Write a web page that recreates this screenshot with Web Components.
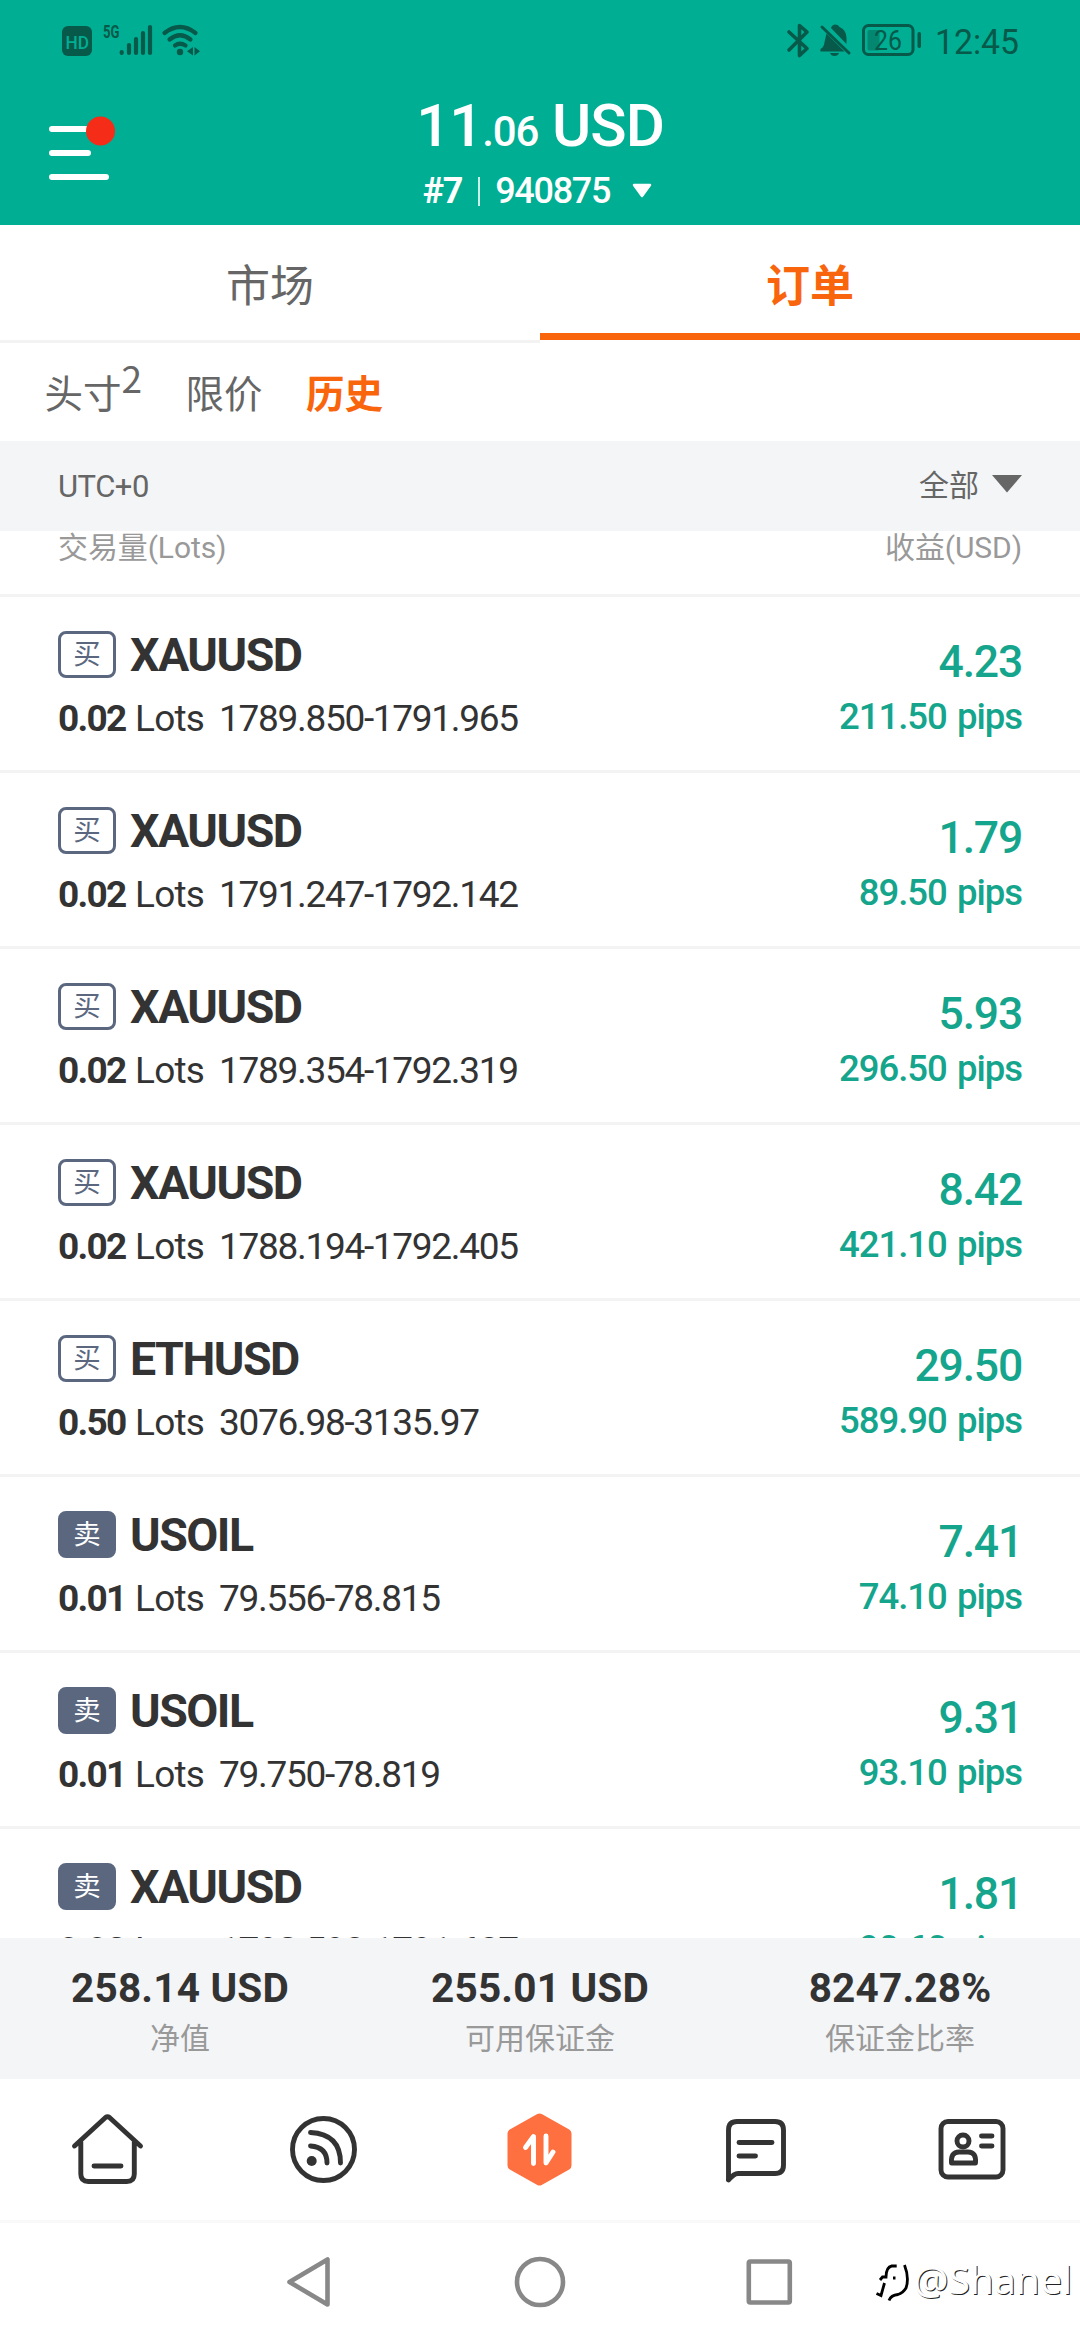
<!DOCTYPE html>
<html lang="zh-CN">
<head>
<meta charset="utf-8">
<title>订单</title>
<style>
  body {
    margin: 0;
    width: 1080px;
    height: 2340px;
    overflow: hidden;
    background: #fff;
    color: #333;
    font-family: Roboto, "Noto Sans CJK SC", sans-serif;
  }
</style>
</head>
<body>
<trade-app></trade-app>

<script>
(function () {
    // every element is a template cloned into an open shadow root
    function define(name, html, setup) {
        const tmpl = document.createElement("template");
        tmpl.innerHTML = html;
        customElements.define(name, class extends HTMLElement {
            constructor() {
                super();
                this._shadowRoot = this.attachShadow({ mode: "open" });
                this._shadowRoot.appendChild(tmpl.content.cloneNode(true));
            }
            connectedCallback() {
                if (setup) setup.call(this, this._shadowRoot);
            }
        });
    }

    define("status-bar", `
      <style>
        :host { display: flex; justify-content: space-between; height: 81px; color: #07594a; }
        svg { display: block; }
        text { font-family: Roboto, sans-serif; }
      </style>
      <svg width="220" height="81" fill="currentColor">
        <rect x="62" y="26" width="30" height="30" rx="6"/>
        <text x="65.500" y="48.500" font-size="19" font-weight="500" textLength="23.500" lengthAdjust="spacingAndGlyphs" fill="#00ae93">HD</text>
        <text x="103" y="38" font-size="18.500" font-weight="700" textLength="16.500" lengthAdjust="spacingAndGlyphs">5G</text>
        <g stroke="currentColor" stroke-width="4.200" stroke-linecap="round">
          <path d="M121.700 52v1M129 45v8M136 39v14M143 33v20M150 27v26"/>
        </g>
        <g fill="none" stroke="currentColor" stroke-width="4.200" stroke-linecap="round">
          <path d="M164.500 33q15.500 -12 31 0M169.500 39.500q10.500 -8.500 21 0M175 45.500q5 -3.500 10.500 0"/>
        </g>
        <circle cx="180" cy="52" r="3.200"/>
        <path d="M193 47v8.500l-6 -4.200zM194.500 47v8.500l5.500 -4.200z"/>
      </svg>
      <svg width="300" height="81" viewBox="780 0 300 81" fill="currentColor">
        <path d="M789 32l18 16.500l-7.500 7v-30l7.500 6.500l-18 18" fill="none" stroke="currentColor" stroke-width="3.600" stroke-linejoin="round" stroke-linecap="round"/>
        <path d="M831 28q1 -3.500 4.500 -3.500q3 0 4 2.500q7 3 7 11v6zM826.500 33.500l18 18h-24v-2.500q4 -2.500 4 -7zM830 53h9q-1 3 -4.500 3t-4.500 -3z"/>
        <path d="M822 27l27 26" stroke="currentColor" stroke-width="3" stroke-linecap="round"/>
        <rect x="863.500" y="25.500" width="49.500" height="29" rx="5" fill="none" stroke="currentColor" stroke-width="3"/>
        <rect x="867.500" y="30" width="12" height="20.500" rx="2" opacity=".45"/>
        <rect x="917.500" y="32" width="3.500" height="16" rx="1.700"/>
        <text x="874" y="50" font-size="27" textLength="28" lengthAdjust="spacingAndGlyphs">26</text>
        <text x="935" y="54" font-size="35" textLength="84" lengthAdjust="spacingAndGlyphs">12:45</text>
      </svg>
    `);

    define("menu-button", `
      <style>
        :host { display: block; width: 72px; height: 72px; }
      </style>
      <svg width="72" height="72" viewBox="46 112 72 72">
        <path d="M52 129h42M52 153h36M52 177h54" stroke="#fff" stroke-width="6" stroke-linecap="round"/>
        <circle cx="100.500" cy="131" r="14.500" fill="#f52c17"/>
      </svg>
    `);

    define("account-header", `
      <style>
        :host { display: grid; grid-template-columns: 118px 1fr 118px; height: 144px; color: #fff; }
        menu-button { margin: 31px 0 0 46px; }
        .account { display: flex; flex-direction: column; align-items: center; }
        .balance { height: 82px; line-height: 90px; font-size: 60px; letter-spacing: -1px; white-space: nowrap; font-weight: 500; }
        .balance small { font-size: 42px; letter-spacing: -1.200px; }
        .id { display: flex; align-items: center; height: 56px; font-size: 36px; letter-spacing: -1.300px; font-weight: 500; margin-right: 4px; }
        .id b { font-weight: 700; }
        .id i { width: 2px; height: 29px; background: #c9f1ea; margin: 0 15px 0 16px; }
        .id svg { margin-left: 21px; }
      </style>
      <menu-button></menu-button>
      <div class="account">
        <div class="balance"><slot name="whole"></slot><small><slot name="cents"></slot></small> USD</div>
        <div class="id"><b><slot name="rank"></slot></b><i></i><slot name="number"></slot>
          <svg width="22" height="16"><path d="M3 2h16L11 13z" fill="#fff" stroke="#fff" stroke-width="2.500" stroke-linejoin="round"/></svg>
        </div>
      </div>
    `);

    define("main-tab", `
      <style>
        :host { display: flex; flex: 1; height: 118px; box-sizing: border-box; align-items: center; justify-content: center;
          font-size: 44px; color: #666; border-bottom: 3px solid #f3f3f3; }
        :host([active]) { color: #f9650c; font-weight: 700; height: 115px; border-bottom: 7px solid #f9650c; }
        :host([active]) span { margin-top: 7px; }
      </style>
      <span><slot></slot></span>
    `);

    define("sub-tab", `
      <style>
        :host { display: flex; font-size: 38.500px; color: #666; line-height: 103px; height: 98px; }
        :host([active]) { color: #f9650c; font-weight: 700; }
        ::slotted(sup) { font-size: 37px; line-height: 69px; font-family: "Noto Sans CJK SC"; vertical-align: top; }
      </style>
      <slot></slot>
    `);

    define("filter-bar", `
      <style>
        :host { display: flex; justify-content: space-between; align-items: center; height: 90px; padding: 0 58px;
          background: #f4f5f7; color: #666; font-size: 30px; }
        .zone { letter-spacing: -.5px; font-size: 31px; }
        .select { display: flex; align-items: center; gap: 13px; line-height: 40px; }
        .select svg { margin-bottom: 2px; }
      </style>
      <span class="zone"><slot name="zone"></slot></span>
      <span class="select"><slot name="range"></slot>
        <svg width="30" height="20"><path d="M0 0h30L15 17.500z" fill="#666"/></svg></span>
    `);

    define("column-heads", `
      <style>
        :host { display: flex; justify-content: space-between; height: 63px; padding: 0 58px; line-height: 34px;
          color: #999; font-size: 30px; letter-spacing: -.1px; border-bottom: 3px solid #f3f3f3; }
      </style>
      <slot></slot>
    `);

    define("order-row", `
      <style>
        :host { display: flex; justify-content: space-between; height: 173px; padding: 0 58px; border-bottom: 3px solid #f3f3f3; }
        .head { display: flex; align-items: center; gap: 14px; height: 47px; margin-top: 34px; }
        .side { box-sizing: border-box; width: 58px; height: 47px; border: 3px solid #5a677f; border-radius: 8px;
          text-align: center; line-height: 42px; font-size: 27.500px; color: #5a677f; }
        :host([side="sell"]) .side { background: #5a677f; color: #fff; }
        .symbol { font-size: 46.500px; font-weight: 700; letter-spacing: -1.500px; line-height: 47px; padding-top: 2px; }
        .detail { display: flex; margin-top: 19px; line-height: 44px; font-size: 37px; white-space: nowrap; }
        .lots { width: 77px; font-weight: 700; letter-spacing: -1.700px; }
        .unit { width: 84px; letter-spacing: -.8px; }
        .price { letter-spacing: -1.300px; }
        .result { display: flex; flex-direction: column; align-items: flex-end; color: #15a58c; font-weight: 500; }
        .profit { margin-top: 38px; line-height: 54px; font-size: 44.500px; letter-spacing: -1.200px; }
        .pips { margin-top: 6px; line-height: 44px; font-size: 36.500px; letter-spacing: -1px; word-spacing: 2px; }
      </style>
      <div>
        <div class="head"><span class="side"></span><span class="symbol"></span></div>
        <div class="detail"><span class="lots"></span><span class="unit">Lots</span><span class="price"></span></div>
      </div>
      <div class="result"><span class="profit"></span><span class="pips"></span></div>
    `, function (root) {
        const set = (cls, text) => { root.querySelector(cls).textContent = text; };
        set(".side", this.getAttribute("side") === "sell" ? "卖" : "买");
        set(".symbol", this.getAttribute("symbol"));
        set(".lots", this.getAttribute("lots"));
        set(".price", this.getAttribute("price"));
        set(".profit", this.getAttribute("profit"));
        set(".pips", this.getAttribute("pips") + " pips");
    });

    // the last row scrolls under the account summary
    define("order-list", `
      <style>
        :host { display: block; height: 1341px; overflow: hidden; }
      </style>
      <slot></slot>
    `);

    define("account-stat", `
      <style>
        :host { display: flex; flex: 1; flex-direction: column; align-items: center; padding-top: 26px; }
        b { font-size: 40.500px; line-height: 48px; letter-spacing: .2px; }
        span { font-size: 30px; line-height: 44px; margin-top: 5px; color: #999; }
      </style>
      <b><slot></slot></b><span></span>
    `, function (root) {
        root.querySelector("span").textContent = this.getAttribute("label");
    });

    define("app-nav", `
      <style>
        :host { display: block; height: 141px; border-bottom: 3px solid #f9f9f9; }
        .items { display: grid; grid-template-columns: repeat(5, 1fr); height: 141px; }
        svg { width: 216px; height: 141px; fill: none; stroke: #333; stroke-width: 4.900; stroke-linecap: round; stroke-linejoin: round; }
      </style>
      <div class="items">
        <svg viewBox="0 2079 216 141"><path d="M74.500 2146L105.500 2117.500q2 -1.500 4 0L140.500 2146M80.800 2142v32q0 7.500 7.500 7.500h38.500q7.500 0 7.500 -7.500v-32M94 2166h27"/></svg>
        <svg viewBox="216 2079 216 141"><circle cx="323.500" cy="2149.500" r="31"/><circle cx="311.700" cy="2161" r="5" fill="#333" stroke="none"/>
          <path d="M310.500 2146q16.500 1 16.500 17M310.500 2132.500q30 1.500 30 30.500"/></svg>
        <svg viewBox="432 2079 216 141"><path d="M539.500 2118L567 2133.500v32L539.500 2181L512 2165.500v-32z" fill="#ff7040" stroke="#ff7040" stroke-width="9"/>
          <path d="M525.500 2147.500l8 -11v27M546 2136v27l7 -11" stroke="#fff"/></svg>
        <svg viewBox="648 2079 216 141"><path d="M728.500 2180v-50q0 -8.500 8.500 -8.500h38q8.500 0 8.500 8.500v35q0 8.500 -8.500 8.500h-37q-4 0 -9.500 6.500M739 2142.500h33M739 2156h16.500"/></svg>
        <svg viewBox="864 2079 216 141"><rect x="941" y="2121.500" width="62" height="55.500" rx="7"/><circle cx="963" cy="2141" r="6"/>
          <path d="M951.500 2163q-1 -11 7.500 -11h9q8.500 0 7.500 11zM981.500 2136h10.500M981.500 2146h10.500"/></svg>
      </div>
    `);

    define("system-nav", `
      <style>
        :host { display: block; height: 117px; position: relative; }
        svg.keys { display: block; fill: none; stroke: #888; stroke-width: 4.600; stroke-linejoin: round; }
        .mark { position: absolute; right: 8px; top: 27px; display: flex; align-items: center; height: 56px;
          color: #fff; font-family: "Noto Sans", sans-serif; font-size: 39px; text-shadow: 1px 1px 0 #222; }
        .mark svg { margin: 8px 4px 0 0; }
      </style>
      <svg class="keys" width="1080" height="117" viewBox="0 2223 1080 117">
        <path d="M327.500 2259.500v45L289.500 2282z"/>
        <circle cx="540" cy="2282" r="23"/>
        <rect x="748.800" y="2261.500" width="41" height="41" rx="1.500"/>
      </svg>
      <div class="mark">
        <svg width="34" height="42" fill="none" stroke="#000" stroke-width="2.800">
          <path d="M21.700 5h-5q-5.500 1 -5.700 11h-3.500l-2.500 3M9.500 22l-3.500 12.500l-4.500 -2M29.500 4q5 13 1.500 23q-3 5 -8 6.500q-7 .5 -9 6M18 17h2.500"/>
        </svg>
        <span><slot></slot></span>
      </div>
    `);

    define("trade-app", `
      <style>
        :host { display: flex; flex-direction: column; width: 1080px; height: 2340px; }
        header { background: #00ae93; }
        .tabs { display: flex; align-items: flex-start; height: 118px; }
        .subtabs { display: flex; height: 98px; padding-left: 44.500px; }
        .subtabs sub-tab + sub-tab { margin-left: 43.500px; }
        .stats { display: flex; height: 141px; background: #f4f5f7; }
      </style>
      <header>
        <status-bar></status-bar>
        <account-header>
          <span slot="whole">11</span><span slot="cents">.06</span>
          <span slot="rank">#7</span><span slot="number">940875</span>
        </account-header>
      </header>
      <div class="tabs"><main-tab>市场</main-tab><main-tab active>订单</main-tab></div>
      <div class="subtabs"><sub-tab>头寸<sup>2</sup></sub-tab><sub-tab>限价</sub-tab><sub-tab active>历史</sub-tab></div>
      <filter-bar><span slot="zone">UTC+0</span><span slot="range">全部</span></filter-bar>
      <column-heads><span>交易量(Lots)</span><span>收益(USD)</span></column-heads>
      <order-list>
        <order-row side="buy" symbol="XAUUSD" lots="0.02" price="1789.850-1791.965" profit="4.23" pips="211.50"></order-row>
        <order-row side="buy" symbol="XAUUSD" lots="0.02" price="1791.247-1792.142" profit="1.79" pips="89.50"></order-row>
        <order-row side="buy" symbol="XAUUSD" lots="0.02" price="1789.354-1792.319" profit="5.93" pips="296.50"></order-row>
        <order-row side="buy" symbol="XAUUSD" lots="0.02" price="1788.194-1792.405" profit="8.42" pips="421.10"></order-row>
        <order-row side="buy" symbol="ETHUSD" lots="0.50" price="3076.98-3135.97" profit="29.50" pips="589.90"></order-row>
        <order-row side="sell" symbol="USOIL" lots="0.01" price="79.556-78.815" profit="7.41" pips="74.10"></order-row>
        <order-row side="sell" symbol="USOIL" lots="0.01" price="79.750-78.819" profit="9.31" pips="93.10"></order-row>
        <order-row side="sell" symbol="XAUUSD" lots="0.02" price="1792.593-1791.687" profit="1.81" pips="90.60"></order-row>
      </order-list>
      <div class="stats">
        <account-stat label="净值">258.14 USD</account-stat>
        <account-stat label="可用保证金">255.01 USD</account-stat>
        <account-stat label="保证金比率">8247.28%</account-stat>
      </div>
      <app-nav></app-nav>
      <system-nav>@Shanel</system-nav>
    `);
})();
</script>
</body>
</html>
